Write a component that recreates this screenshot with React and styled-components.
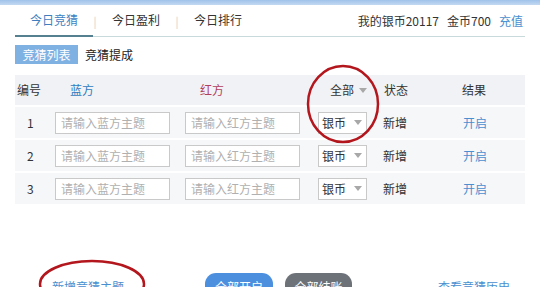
import React from "react";
import styled, { createGlobalStyle } from "styled-components";

const GlobalStyle = createGlobalStyle`
  html, body { margin: 0; padding: 0; background: #ffffff; }
  body {
    font-family: "Noto Sans CJK SC", "Noto Sans", "Liberation Sans", sans-serif;
    font-size: 12px;
    color: #333;
  }
  * { box-sizing: border-box; }
`;

const Page = styled.div`
  position: relative;
  width: 540px;
  height: 287px;
  overflow: hidden;
  background: #fff;
`;

const TopStrip = styled.div`
  height: 5px;
  background: linear-gradient(#9fc2ea, #c3d9f1);
`;

const Content = styled.div`
  padding: 0 15px;
`;

const TabBar = styled.div`
  display: flex;
  align-items: stretch;
  height: 32px;
  border-bottom: 1px solid #c8dadc;
`;

const Tab = styled.div`
  display: flex;
  align-items: center;
  padding: 0 15px;
  line-height: 16px;
  color: ${(p) => (p.$active ? "#3f7fc0" : "#333")};
  border-bottom: ${(p) => (p.$active ? "2px solid #54808f" : "2px solid transparent")};
  margin-bottom: -1px;
`;

const Sep = styled.div`
  display: flex;
  align-items: center;
  width: 4px;
  justify-content: center;
  color: #cfcfcf;
  font-size: 11px;
`;

const Wallet = styled.div`
  margin-left: auto;
  display: flex;
  align-items: center;
  gap: 8px;
  color: #333;
  padding-right: 2px;
`;

const BlueLink = styled.span`
  color: #4a8fd0;
`;

const SubTabs = styled.div`
  display: flex;
  gap: 7px;
  margin-top: 8px;
  height: 19px;
`;

const SubTab = styled.div`
  display: flex;
  align-items: center;
  padding: 0 7.5px;
  line-height: 16px;
  background: ${(p) => (p.$active ? "#7fb1e2" : "transparent")};
  color: ${(p) => (p.$active ? "#fff" : "#222")};
  padding-left: ${(p) => (p.$active ? "7.5px" : "0")};
`;

const Table = styled.div`
  margin-top: 11px;
  display: flex;
  flex-direction: column;
  gap: 2px;
`;

const cols = "40px 130px 130px 65px 60px 1fr";

const HeaderRow = styled.div`
  display: grid;
  grid-template-columns: ${cols};
  align-items: center;
  height: 30px;
  background: #f0f2f5;
`;

const Row = styled.div`
  display: grid;
  grid-template-columns: ${cols};
  align-items: center;
  height: 31px;
  background: #f6f7f9;
`;

const Cell = styled.div`
  display: flex;
  align-items: center;
  line-height: 16px;
  padding-left: ${(p) => p.$pl || 0}px;
  color: ${(p) => p.$color || "#333"};
`;

const Input = styled.input`
  width: 115px;
  height: 22px;
  border: 1px solid #c9c9c9;
  background: #fff;
  padding: 0 5px;
  font-family: inherit;
  font-size: 12px;
  outline: none;
  &::placeholder { color: #b0b0b0; }
`;

const Select = styled.div`
  display: flex;
  align-items: center;
  justify-content: space-between;
  width: 49px;
  height: 22px;
  margin-left: 3px;
  border: 1px solid #c9c9c9;
  background: #fff;
  padding: 0 4px 0 3px;
  color: #333;
  line-height: 16px;
`;

const Caret = styled.span`
  width: 0;
  height: 0;
  border-left: 4px solid transparent;
  border-right: 4px solid transparent;
  border-top: 5px solid #a8a8a8;
  margin-left: ${(p) => p.$ml || 0}px;
`;

const Footer = styled.div`
  display: flex;
  align-items: flex-start;
  margin-top: 69px;
  height: 24px;
`;

const FooterLink = styled.span`
  color: #4a8fd0;
  margin-left: ${(p) => p.$ml}px;
  line-height: 16px;
  padding-top: 6px;
`;

const Pill = styled.div`
  margin-left: ${(p) => p.$ml}px;
  height: 24px;
  width: ${(p) => p.$w}px;
  border-radius: 11px;
  background: ${(p) => p.$bg};
  color: #fff;
  display: flex;
  align-items: flex-start;
  justify-content: center;
  line-height: 16px;
  padding-top: 6px;
`;

const Annot = styled.svg`
  position: absolute;
  left: 0;
  top: 0;
  pointer-events: none;
`;

const rows = [1, 2, 3];

export default function App() {
  return (
    <>
      <GlobalStyle />
      <Page>
        <TopStrip />
        <Content>
          <TabBar>
            <Tab $active>今日竞猜</Tab>
            <Sep>|</Sep>
            <Tab>今日盈利</Tab>
            <Sep>|</Sep>
            <Tab>今日排行</Tab>
            <Wallet>
              <span>我的银币20117</span>
              <span>金币700</span>
              <BlueLink>充值</BlueLink>
            </Wallet>
          </TabBar>
          <SubTabs>
            <SubTab $active>竞猜列表</SubTab>
            <SubTab>竞猜提成</SubTab>
          </SubTabs>
          <Table>
            <HeaderRow>
              <Cell $pl={2}>编号</Cell>
              <Cell $pl={15} $color="#2f7cbf">蓝方</Cell>
              <Cell $pl={15} $color="#b0405e">红方</Cell>
              <Cell $pl={15}>
                全部<Caret $ml={5} />
              </Cell>
              <Cell $pl={4}>状态</Cell>
              <Cell $pl={22}>结果</Cell>
            </HeaderRow>
            {rows.map((n) => (
              <Row key={n}>
                <Cell $pl={12}>{n}</Cell>
                <Cell>
                  <Input placeholder="请输入蓝方主题" />
                </Cell>
                <Cell>
                  <Input placeholder="请输入红方主题" />
                </Cell>
                <Cell>
                  <Select>
                    银币<Caret />
                  </Select>
                </Cell>
                <Cell $pl={3}>新增</Cell>
                <Cell $pl={23} $color="#4a8fd0">开启</Cell>
              </Row>
            ))}
          </Table>
          <Footer>
            <FooterLink $ml={37}>新增竞猜主题</FooterLink>
            <Pill $ml={81} $w={68} $bg="#4b8fde">全部开启</Pill>
            <Pill $ml={12} $w={67} $bg="#6d7279">全部结账</Pill>
            <FooterLink $ml={86}>查看竞猜历史</FooterLink>
          </Footer>
        </Content>
        <Annot width="540" height="287" viewBox="0 0 540 287">
          <ellipse cx="343" cy="104" rx="35" ry="38" fill="none" stroke="#b3161c" strokeWidth="2.5" />
          <ellipse cx="92" cy="284" rx="52" ry="23" fill="none" stroke="#b3161c" strokeWidth="2.5" />
        </Annot>
      </Page>
    </>
  );
}
